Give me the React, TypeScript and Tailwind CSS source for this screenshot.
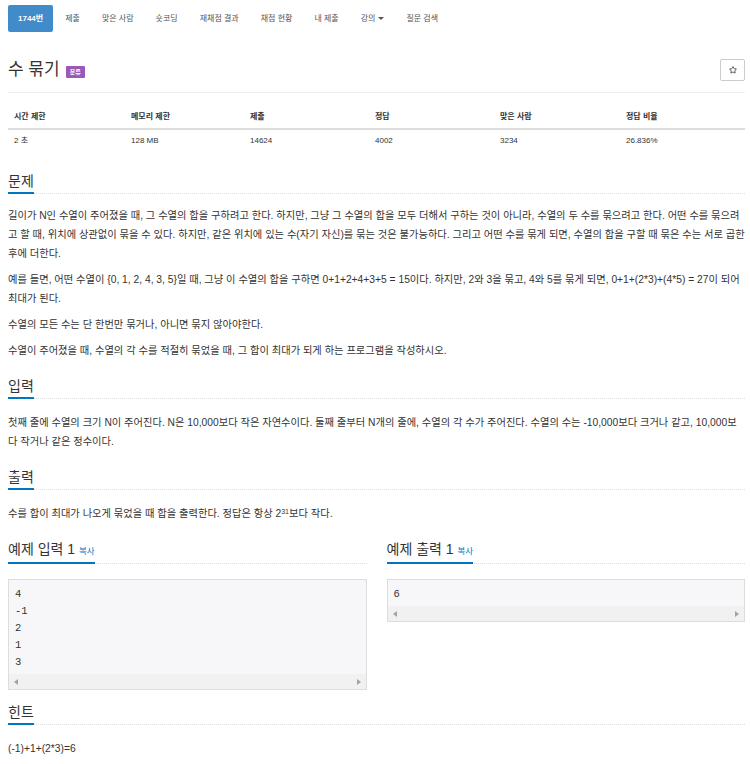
import { Star } from "lucide-react";

// ── Data ───────────────────────────────────────────────────────────────────
const tabs = ["1744번", "제출", "맞은 사람", "숏코딩", "재채점 결과", "채점 현황", "내 제출", "강의", "질문 검색"];

const stats = [
  { label: "시간 제한", value: "2 초" },
  { label: "메모리 제한", value: "128 MB" },
  { label: "제출", value: "14624" },
  { label: "정답", value: "4002" },
  { label: "맞은 사람", value: "3234" },
  { label: "정답 비율", value: "26.836%" },
];

const description = [
  "길이가 N인 수열이 주어졌을 때, 그 수열의 합을 구하려고 한다. 하지만, 그냥 그 수열의 합을 모두 더해서 구하는 것이 아니라, 수열의 두 수를 묶으려고 한다. 어떤 수를 묶으려고 할 때, 위치에 상관없이 묶을 수 있다. 하지만, 같은 위치에 있는 수(자기 자신)를 묶는 것은 불가능하다. 그리고 어떤 수를 묶게 되면, 수열의 합을 구할 때 묶은 수는 서로 곱한 후에 더한다.",
  "예를 들면, 어떤 수열이 {0, 1, 2, 4, 3, 5}일 때, 그냥 이 수열의 합을 구하면 0+1+2+4+3+5 = 15이다. 하지만, 2와 3을 묶고, 4와 5를 묶게 되면, 0+1+(2*3)+(4*5) = 27이 되어 최대가 된다.",
  "수열의 모든 수는 단 한번만 묶거나, 아니면 묶지 않아야한다.",
  "수열이 주어졌을 때, 수열의 각 수를 적절히 묶었을 때, 그 합이 최대가 되게 하는 프로그램을 작성하시오.",
];

// ── Pieces ─────────────────────────────────────────────────────────────────
function Headline({ children }: { children: React.ReactNode }) {
  return (
    <div className="flex border-b border-dotted border-[#ddd]">
      <h2 className="-mb-px border-b-2 border-[#0076c0] pb-px text-[14px] leading-[20px] font-normal text-[#333]">
        {children}
      </h2>
    </div>
  );
}

function ScrollBar() {
  return (
    <div className="flex h-[15px] items-center justify-between bg-[#f1f1f1] px-[5px]">
      <span className="h-0 w-0 border-y-[3px] border-r-[4px] border-y-transparent border-r-[#a3a3a3]" />
      <span className="h-0 w-0 border-y-[3px] border-l-[4px] border-y-transparent border-l-[#a3a3a3]" />
    </div>
  );
}

function Sample({ title, lines }: { title: string; lines: string[] }) {
  return (
    <section>
      <Headline>
        {title} <span className="text-[8.5px] text-[#0076c0]">복사</span>
      </Headline>
      <div className="mt-[15px] border border-[#ddd] bg-[#f7f7f9]">
        <pre className="px-[6px] pt-[6px] pb-[3px] font-['Liberation_Mono',monospace] text-[10.5px] leading-[17px] text-[#333]">
          {lines.join("\n")}
        </pre>
        <ScrollBar />
      </div>
    </section>
  );
}

// ── Component ──────────────────────────────────────────────────────────────
export default function App() {
  return (
    <div className="min-h-screen bg-white pl-2 pr-[5px] font-['Liberation_Sans','Noto_Sans_CJK_KR',sans-serif] text-[#333]">
      {/* ── NAV ── */}
      <nav className="flex gap-[2px] pt-[5px]">
        {tabs.map((t, i) => (
          <span
            key={t}
            className={
              i === 0
                ? "flex h-[27px] items-center rounded-[2px] bg-[#428bca] px-[10px] text-[8px] font-bold text-white"
                : "flex h-[27px] items-center px-[10px] text-[8px] text-[#555]"
            }
          >
            {t}
            {t === "강의" && (
              <span className="ml-[3px] h-0 w-0 border-x-[3px] border-t-[3px] border-x-transparent border-t-[#555]" />
            )}
          </span>
        ))}
      </nav>

      {/* ── TITLE ── */}
      <div className="mt-[26px] flex h-[24px] items-center justify-between">
        <div className="flex items-end gap-[6px]">
          <h1 className="text-[17px] leading-[24px] font-normal">수 묶기</h1>
          <span className="mb-[4px] rounded-[1px] bg-[#9b59b6] px-[4px] py-[1.5px] text-[6px] leading-[9px] font-bold text-white">
            분류
          </span>
        </div>
        <button className="flex h-[22px] w-[25px] items-center justify-center rounded-[2px] border border-[#ccc] bg-white">
          <Star size={8} strokeWidth={2.5} color="#333" />
        </button>
      </div>
      <div className="mt-[10px] h-px bg-[#eee]" />

      {/* ── STATS TABLE ── */}
      <div className="mt-[13px] grid grid-cols-[117px_119px_125px_125px_126px_1fr] text-[8px]">
        {stats.map((s) => (
          <div key={s.label} className="border-b-2 border-[#ddd] px-[6px] py-[7px] leading-[8px] font-bold">
            {s.label}
          </div>
        ))}
        {stats.map((s) => (
          <div key={s.label} className="px-[6px] py-[7px] leading-[8px]">
            {s.value}
          </div>
        ))}
      </div>

      {/* ── PROBLEM ── */}
      <section className="mt-[19px]">
        <Headline>문제</Headline>
        <div className="mt-[12px] flex flex-col gap-[7px] text-[10.28px] leading-[19px]">
          {description.map((p, i) => (
            <p key={i}>{p}</p>
          ))}
        </div>
      </section>

      <section className="mt-[16px]">
        <Headline>입력</Headline>
        <p className="mt-[14px] text-[10.28px] leading-[19px]">
          첫째 줄에 수열의 크기 N이 주어진다. N은 10,000보다 작은 자연수이다. 둘째 줄부터 N개의 줄에, 수열의 각 수가 주어진다. 수열의 수는 -10,000보다 크거나 같고, 10,000보다 작거나 같은 정수이다.
        </p>
      </section>

      <section className="mt-[16px]">
        <Headline>출력</Headline>
        <p className="mt-[14px] text-[10.28px] leading-[19px]">
          수를 합이 최대가 나오게 묶었을 때 합을 출력한다. 정답은 항상 2<sup className="text-[7px]">31</sup>보다 작다.
        </p>
      </section>

      {/* ── SAMPLES ── */}
      <div className="mt-[16px] grid grid-cols-2 items-start gap-5">
        <Sample title="예제 입력 1" lines={["4", "-1", "2", "1", "3"]} />
        <Sample title="예제 출력 1" lines={["6"]} />
      </div>

      <section className="mt-[12px] pb-4">
        <Headline>힌트</Headline>
        <p className="mt-[14px] text-[10.28px] leading-[19px]">(-1)+1+(2*3)=6</p>
      </section>
    </div>
  );
}
